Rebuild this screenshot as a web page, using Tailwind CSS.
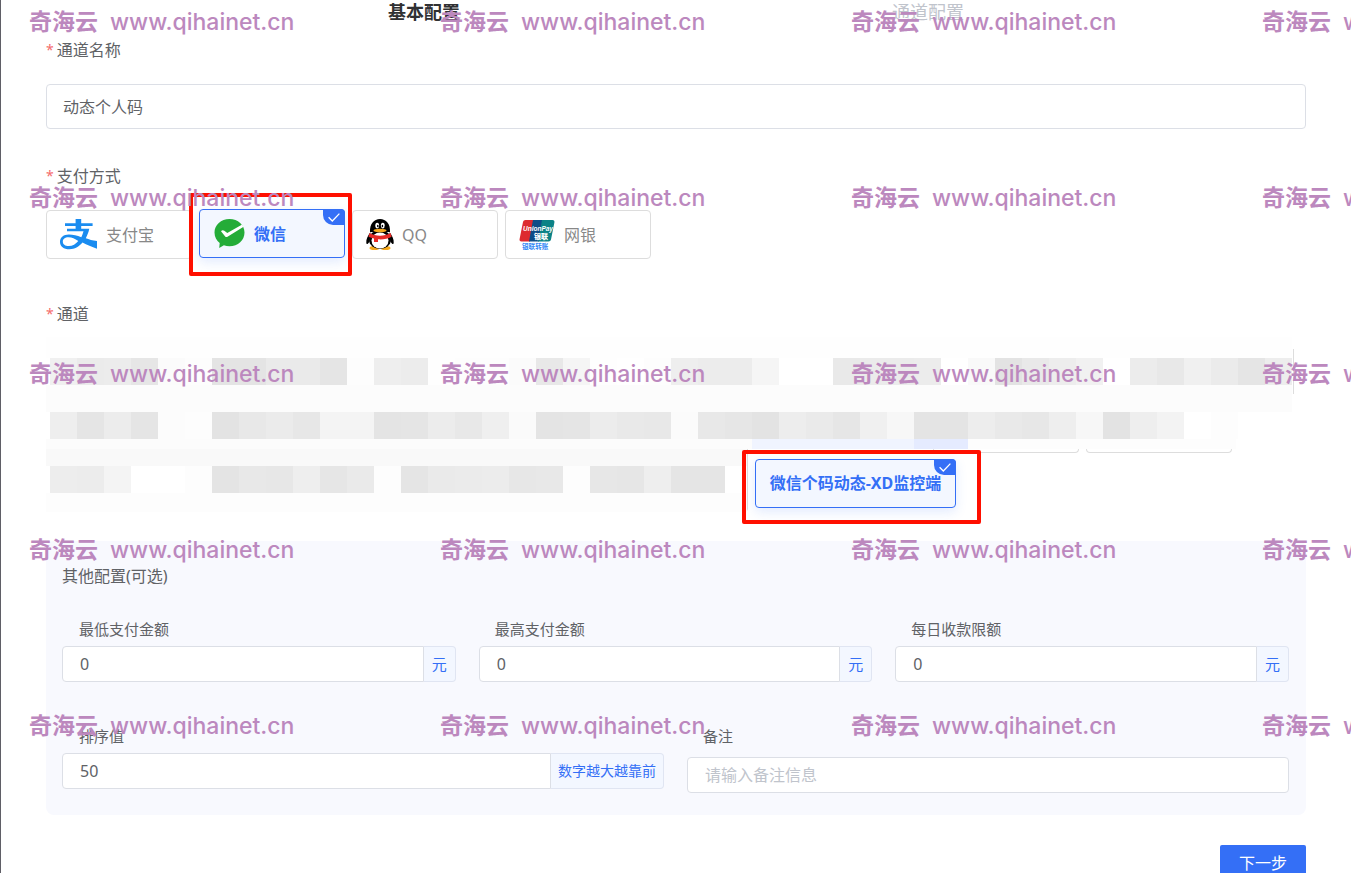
<!DOCTYPE html>
<html lang="zh-CN">
  <head>
    <meta charset="UTF-8" />
    <meta name="viewport" content="width=device-width, initial-scale=1.0" />
    <title>基本配置</title>
    <script src="https://cdn.jsdelivr.net/npm/@tailwindcss/browser@4"></script>
  </head>
  <body class="relative h-screen overflow-hidden border-l border-[#5f5e66] bg-white font-['Noto_Sans','Noto_Sans_CJK_SC',sans-serif] text-base text-[#606266]">
    <main class="pl-[45px] pr-[45px]">
      <!-- steps -->
      <div class="grid grid-cols-2 px-[10%] text-center text-lg leading-6">
        <div class="font-bold text-[#303133]">基本配置</div>
        <div class="text-[#c0c4cc]">通道配置</div>
      </div>

      <form>
        <label for="name" class="mt-[14px] flex h-6 items-center gap-[3px] leading-6"><span class="text-sm text-[#f56c6c]">*</span>通道名称</label>
        <input id="name" type="text" value="动态个人码" class="mt-[22px] block h-[45px] w-full rounded border border-[#dcdfe6] px-4 pb-0.5" />

        <div class="mt-[35px] flex h-6 items-center gap-[3px] leading-6"><span class="text-sm text-[#f56c6c]">*</span>支付方式</div>
        <div class="mt-[22px] flex gap-[7px] text-[#888888]">
          <button type="button" class="flex h-[49px] w-[146px] items-center gap-[9px] rounded border border-[#dddddd] bg-white pl-[13px]">
            <svg class="h-[31px] w-[37px]" viewBox="0 0 37 31" fill="#1a8cf0">
              <path d="M15.600 0h5.600v4.300h11.400v2.700H21.200v2.800h8.100c-.8 3.700-2 6.700-3.500 9.400 3.200 1.200 6.700 2.300 11.200 2.800v7.700c-5.300-1.500-10.100-3.800-14.500-6.100-3.600 4.300-7.800 6.700-13 6.700C3.700 30.300 0 27.200 0 22.900c0-4.500 3.700-7.300 8.800-7.300 4.300 0 8.300 1.200 12.500 2.600.9-1.900 1.700-3.900 2.200-5.900H7V9.800h8.600V7H5V4.300h10.600zM8.500 18.200c-3.700 0-5.700 1.900-5.700 4.300 0 2.800 2.300 4.600 6 4.600 3.800 0 7-2.100 9.500-5.200-3.400-2.100-6.300-3.700-9.800-3.700z" />
            </svg>
            支付宝
          </button>
          <div class="relative">
            <button type="button" class="-mt-px flex h-[49px] w-[146px] items-center gap-[9px] rounded border border-[#346ff6] bg-[#f3f7ff] pl-[14px] font-bold text-[#346ff6] shadow-[0_4px_12px_rgba(52,111,246,0.14)]">
              <svg class="h-[30px] w-[31px]" viewBox="0 0 31 30">
                <path fill="#24ac38" d="M15.500 0C24 0 30.500 5.900 30.500 13.600S24 27.300 15.500 27.300c-2 0-3.900-.4-5.600-1L5.200 29l.5-4.900C2.600 21.600.5 18 .5 13.600.5 5.900 7 0 15.500 0z" />
                <path fill="#fff" d="M7 12.300c.8-1.200 2.300-1.300 3.300-.5l3 2.100L28.200 5.600l1 2.300-15.700 9.900c-.9.5-1.900.3-2.500-.6z" />
              </svg>
              微信
            </button>
            <span class="absolute -top-px right-0 flex h-4 w-[22px] items-center justify-center rounded-tr rounded-bl-[10px] bg-[#346ff6]">
              <svg class="h-[9px] w-3" viewBox="0 0 12 9" fill="none" stroke="#fff" stroke-width="1.300"><path d="M.6 4.300 4.300 8 11.400.6" /></svg>
            </span>
            <span class="pointer-events-none absolute -top-[17px] -left-[10px] h-[83px] w-[163px] rounded-xs border-4 border-[#ff0f00]"></span>
          </div>
          <button type="button" class="flex h-[49px] w-[146px] items-center gap-2 rounded border border-[#dddddd] bg-white pl-[13px]">
            <svg class="h-[31px] w-7" viewBox="0 0 28 31">
              <ellipse cx="8.500" cy="29" rx="5" ry="2" fill="#f5a81c" />
              <ellipse cx="19.500" cy="29" rx="5" ry="2" fill="#f5a81c" />
              <path d="M4.500 13C1.500 17 0 20.500.3 24c.2 2 1.700 1 3-1M23.500 13c3 4 4.500 7.500 4.200 11-.2 2-1.700 1-3-1" />
              <ellipse cx="14" cy="20.500" rx="11" ry="9.500" />
              <path d="M4 13C3.500 5 8 0 14 0s10.500 5 10 13z" />
              <ellipse cx="14" cy="21.500" rx="8.500" ry="8" fill="#fff" />
              <path fill="#e62a26" d="M3.500 14C10 17.500 18 17.500 24.600 14l1 3.800c-4 2.200-9 2.900-13.600 2.500V23H8v-3.500c-2-.4-3.900-1-5.500-1.800z" />
              <ellipse cx="11.200" cy="6.600" rx="1.900" ry="2.800" fill="#fff" />
              <ellipse cx="16.800" cy="6.600" rx="1.900" ry="2.800" fill="#fff" />
              <ellipse cx="11.800" cy="7" rx=".8" ry="1.300" />
              <ellipse cx="16.400" cy="7" rx=".8" ry="1.300" />
              <ellipse cx="14" cy="11.500" rx="6.500" ry="1.700" fill="#f5a81c" />
            </svg>
            QQ
          </button>
          <button type="button" class="flex h-[49px] w-[146px] items-center gap-[9px] rounded border border-[#dddddd] bg-white pl-[13px]">
            <svg class="h-[31px] w-9" viewBox="0 0 36 31">
              <path fill="#dd2a30" d="M6.500 1H15L11 22.500H2.500C1 22.500.2 21.500.6 20L4 3C4.300 1.700 5.200 1 6.500 1z" />
              <path fill="#0e4c87" d="M14 1h10l-4 21.500H10z" />
              <path fill="#0b8286" d="M23 1h10.500c1.500 0 2.200 1 1.900 2.400L32 20.500c-.3 1.300-1.200 2-2.500 2H19z" />
              <text x="4" y="12" fill="#fff" font-family="Liberation Sans, sans-serif" font-size="6.500" font-weight="700" font-style="italic">UnionPay</text>
              <text x="15" y="20" fill="#fff" font-family="Noto Sans CJK SC, sans-serif" font-size="7" font-weight="900">银联</text>
              <text x="3" y="30" fill="#3389f5" font-family="Noto Sans CJK SC, sans-serif" font-size="6.600" font-weight="700">银联转账</text>
            </svg>
            网银
          </button>
        </div>

        <div class="mt-[43px] flex h-6 items-center gap-[3px] leading-6"><span class="text-sm text-[#f56c6c]">*</span>通道</div>
        <!-- channel list, hidden names are pixelated -->
        <div class="relative mt-[11px]">
          <div class="h-[21px] w-[1246px] max-w-full bg-[#fefefe]"></div>
          <div class="flex pl-1" data-shades="f0 eb ec e6 fb fd e4 e4 ea ea e5 fd ee ec fe fd fd fb e8 f5 fe ff fd ee ec ec f5 ff ff e9 eb eb ec ff f9 e3 e9 ed f1 ff ec e8 f0 eb e5 ed"></div>
          <div class="h-[27px] w-[1246px] max-w-full bg-[#fcfcfc]"></div>
          <div class="flex pl-1" data-shades="ee e5 ec e5 fc fd e3 e8 eb e7 f4 f4 e4 e5 ec e8 ef fa e4 e5 ec e9 e8 fb e8 e6 e3 ed ea e6 f0 f7 e4 e4 ed e9 e7 ee f7 e3 ee f3 ff fd"></div>
          <div class="flex h-[10px]">
            <div class="w-[706px] bg-[#fcfcfc]"></div>
            <div class="w-[162px] bg-[#f0f4ff]"></div>
            <div class="w-[54px] bg-[#e5ebff]"></div>
            <div class="w-[268px] bg-[#fdfdfd]"></div>
          </div>
          <div class="flex h-1 gap-[7px] pl-[887px]">
            <div class="w-[146px] rounded-b border-x border-b border-[#dddddd]"></div>
            <div class="w-[146px] rounded-b border-x border-b border-[#dddddd]"></div>
          </div>
          <div class="-mt-1 flex">
            <div class="w-[702px] rounded-br border-r border-[#dddddd]">
              <div class="h-[17px] bg-[#f9f9f9]"></div>
              <div class="flex pl-1" data-shades="ed ec f4 ff ff fd e4 e8 e7 ee e6 ea fd e5 ea eb ec e7 e8 fd e7 e6 ee e5 e5"></div>
              <div class="h-[19px] bg-[#fdfdfd]"></div>
            </div>
            <div class="relative mt-[10px] ml-[7px] h-[49px]">
              <button type="button" class="h-[49px] w-[201px] rounded border border-[#346ff6] bg-[#f3f7ff] pb-0.5 text-center font-bold whitespace-nowrap text-[#346ff6] shadow-[0_4px_12px_rgba(52,111,246,0.14)]">微信个码动态-XD监控端</button>
              <span class="absolute top-0 right-0 flex h-4 w-[22px] items-center justify-center rounded-tr rounded-bl-[10px] bg-[#346ff6]">
                <svg class="h-[9px] w-3" viewBox="0 0 12 9" fill="none" stroke="#fff" stroke-width="1.300"><path d="M.6 4.300 4.300 8 11.400.6" /></svg>
              </span>
              <span class="pointer-events-none absolute -top-[9px] -left-[13px] h-[74px] w-[239px] rounded-xs border-4 border-[#ff0f00] shadow-none"></span>
            </div>
          </div>
          <div class="absolute top-3 left-[1247px] h-[45px] border-l border-[#dddddd]"></div>
        </div>

        <section class="mt-[29px] rounded-lg bg-[#f8f9fe] pt-[23px] pr-[17px] pb-[22px] pl-4">
          <h2 class="leading-6">其他配置(可选)</h2>
          <div class="mt-[29px] grid grid-cols-3 gap-x-[23px]">
            <div>
              <label for="min" class="block pl-[17px] text-[15px] leading-6">最低支付金额</label>
              <div class="mt-[5px] flex h-9">
                <input id="min" type="text" value="0" class="min-w-0 flex-1 rounded-l border border-[#dcdfe6] bg-white px-[17px]" />
                <span class="flex w-8 items-center justify-center rounded-r border border-l-0 border-[#e0e5f2] bg-[#f3f7ff] text-[15px] text-[#346ff6]">元</span>
              </div>
            </div>
            <div>
              <label for="max" class="block pl-4 text-[15px] leading-6">最高支付金额</label>
              <div class="mt-[5px] flex h-9">
                <input id="max" type="text" value="0" class="min-w-0 flex-1 rounded-l border border-[#dcdfe6] bg-white px-[17px]" />
                <span class="flex w-8 items-center justify-center rounded-r border border-l-0 border-[#e0e5f2] bg-[#f3f7ff] text-[15px] text-[#346ff6]">元</span>
              </div>
            </div>
            <div>
              <label for="daily" class="block pl-4 text-[15px] leading-6">每日收款限额</label>
              <div class="mt-[5px] flex h-9">
                <input id="daily" type="text" value="0" class="min-w-0 flex-1 rounded-l border border-[#dcdfe6] bg-white px-[17px]" />
                <span class="flex w-8 items-center justify-center rounded-r border border-l-0 border-[#e0e5f2] bg-[#f3f7ff] text-[15px] text-[#346ff6]">元</span>
              </div>
            </div>
          </div>
          <div class="mt-[42px] grid grid-cols-2 gap-x-[23px]">
            <div>
              <label for="sort" class="block pl-[17px] text-[15px] leading-6">排序值</label>
              <div class="mt-[5px] flex h-9">
                <input id="sort" type="text" value="50" class="min-w-0 flex-1 rounded-l border border-[#dcdfe6] bg-white px-[17px]" />
                <span class="flex w-[113px] items-center justify-center rounded-r border border-l-0 border-[#e0e5f2] bg-[#f3f7ff] text-sm text-[#346ff6]">数字越大越靠前</span>
              </div>
            </div>
            <div>
              <label for="remark" class="block pl-4 text-[15px] leading-6">备注</label>
              <input id="remark" type="text" placeholder="请输入备注信息" class="mt-[9px] block h-9 w-full rounded border border-[#dcdfe6] bg-white px-[17px] placeholder:text-[#c0c4cc]" />
            </div>
          </div>
        </section>

        <div class="mt-[30px] flex justify-end">
          <button type="submit" class="h-9 w-[86px] rounded-xs bg-[#346ff6] text-white">下一步</button>
        </div>
      </form>
    </main>

    <!-- watermark -->
    <div id="watermark" class="pointer-events-none absolute inset-0 overflow-hidden pl-7 text-[#bc88be]"></div>

    <script>
      document.querySelectorAll('[data-shades]').forEach((row) => {
        row.dataset.shades.split(' ').forEach((shade) => {
          const cell = document.createElement('div')
          cell.className = 'h-[27px] w-[27px] shrink-0'
          cell.style.backgroundColor = `#${shade}${shade}${shade}`
          row.appendChild(cell)
        })
      })

      const watermark = document.getElementById('watermark')
      for (let i = 0; i < 5; i++) {
        const line = document.createElement('div')
        line.className = 'flex h-[176px] pt-[7px]'
        for (let j = 0; j < 4; j++) {
          line.innerHTML += `<div class="flex w-[411px] shrink-0 gap-3 text-[23px] leading-7 font-bold whitespace-nowrap"><span>奇海云</span><span class="pt-px font-['Inter'] font-medium">www.qihainet.cn</span></div>`
        }
        watermark.appendChild(line)
      }
    </script>
  </body>
</html>
